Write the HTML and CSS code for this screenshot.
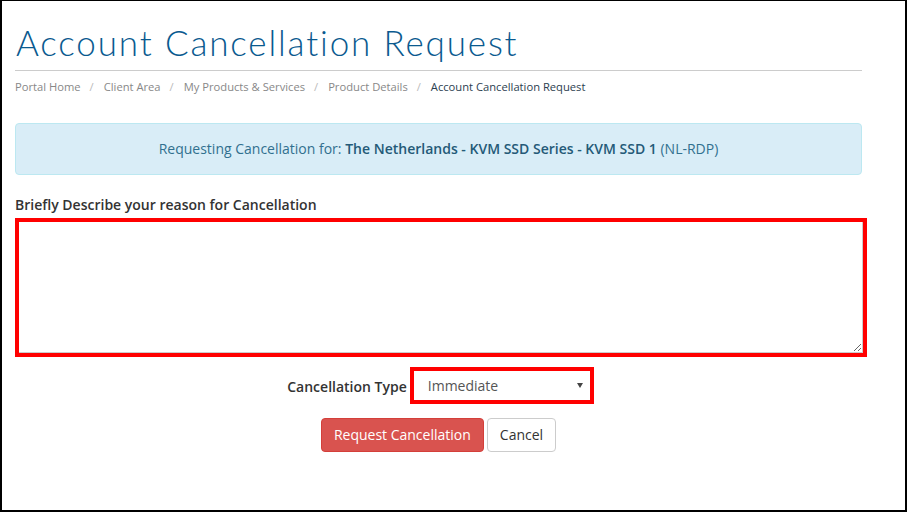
FILE: index.html
```html
<!DOCTYPE html>
<html lang="en">
  <head>
    <meta charset="UTF-8" />
    <meta name="viewport" content="width=device-width, initial-scale=1.0" />
    <title>Account Cancellation Request</title>
    <link rel="stylesheet" href="styles.css">
  </head>
  <body>
    <div class="frame">
      <div class="container">
        <h1 class="page-title">Account Cancellation Request</h1>

        <ol class="breadcrumb">
          <li><a href="#">Portal Home</a></li>
          <li><a href="#">Client Area</a></li>
          <li><a href="#">My Products &amp; Services</a></li>
          <li><a href="#">Product Details</a></li>
          <li class="active">Account Cancellation Request</li>
        </ol>

        <div class="alert">
          Requesting Cancellation for: <strong>The Netherlands - KVM SSD Series - KVM SSD 1</strong> (NL-RDP)
        </div>

        <form class="cancel-form">
          <label class="field-label" for="reason">Briefly Describe your reason for Cancellation</label>
          <div class="highlight highlight-text">
            <textarea id="reason" name="reason"></textarea>
          </div>

          <div class="type-row">
            <label class="type-label" for="type">Cancellation Type</label>
            <div class="highlight highlight-select">
              <select id="type" name="type">
                <option>Immediate</option>
                <option>End of Billing Period</option>
              </select>
              <span class="caret"></span>
            </div>
          </div>

          <div class="actions">
            <button type="submit" class="btn btn-danger">Request Cancellation</button>
            <button type="button" class="btn btn-default">Cancel</button>
          </div>
        </form>
      </div>
    </div>
  </body>
</html>
```

FILE: styles.css
```css
* {
  box-sizing: border-box;
}

body {
  margin: 0;
  padding: 0;
  font-family: "Open Sans", Arial, sans-serif;
  font-size: 14px;
  color: #333;
  background-color: #fff;
}

.frame {
  height: 512px;
  border: 2px solid #000;
  border-top-width: 1px;
  border-right-width: 2px;
  overflow: hidden;
}

.container {
  width: 847px;
  margin-left: 13px;
}

.page-title {
  margin: 23px 0 0;
  padding: 0 0 10px 1px;
  font-family: Lato, "Open Sans", sans-serif;
  font-weight: 300;
  font-size: 35px;
  line-height: 36px;
  letter-spacing: 1.85px;
  color: #0a5a8f;
  border-bottom: 1px solid #ccc;
}

.breadcrumb {
  list-style: none;
  margin: 8px 0 0;
  padding: 0;
  display: flex;
  font-size: 11.2px;
  line-height: 16px;
}

.breadcrumb li + li::before {
  content: "/";
  padding: 0 10px 0 9px;
  color: #bbb;
}

.breadcrumb a {
  color: #888;
  text-decoration: none;
}

.breadcrumb .active {
  color: #2c3e50;
}

.alert {
  margin-top: 28px;
  padding: 15px;
  background-color: #d9edf7;
  border: 1px solid #bce8f1;
  border-radius: 4px;
  color: #31708f;
  text-align: center;
  line-height: 20px;
}

.alert strong {
  font-weight: 600;
  color: #245a78;
}

.field-label {
  display: block;
  margin-top: 20px;
  font-weight: 600;
  line-height: 20px;
}

.highlight {
  border: 4px solid #f00;
  background-color: #fff;
}

.highlight-text {
  width: 852px;
  margin-top: 3px;
}

.highlight-text textarea {
  display: block;
  width: 100%;
  height: 131px;
  margin: 0;
  border: none;
  border-right: 1px solid #ccc;
  border-bottom: 1px solid #ccc;
  font-family: inherit;
  font-size: 14px;
}

.type-row {
  display: flex;
  justify-content: center;
  align-items: center;
  gap: 3px;
  margin-top: 10px;
  padding-left: 4px;
}

.type-label {
  font-weight: 600;
  line-height: 20px;
  margin-top: 2px;
}

.highlight-select {
  position: relative;
  width: 184px;
  height: 37px;
}

.highlight-select select {
  width: 100%;
  height: 100%;
  appearance: none;
  -webkit-appearance: none;
  border: none;
  background: #fff;
  padding: 0 0 0 14px;
  font-family: inherit;
  font-size: 14px;
  color: #555;
  outline: none;
}

.caret {
  position: absolute;
  right: 7px;
  top: 12px;
  width: 0;
  height: 0;
  border-left: 3px solid transparent;
  border-right: 3px solid transparent;
  border-top: 5px solid #444;
  pointer-events: none;
}

.actions {
  display: flex;
  justify-content: center;
  gap: 3px;
  margin-top: 14px;
}

.btn {
  height: 34px;
  padding: 6px 12px;
  font-family: inherit;
  font-size: 14px;
  line-height: 20px;
  border: 1px solid transparent;
  border-radius: 4px;
  cursor: pointer;
}

.btn-danger {
  background-color: #d9534f;
  border-color: #d43f3a;
  color: #fff;
}

.btn-default {
  background-color: #fff;
  border-color: #ccc;
  color: #333;
}
```
